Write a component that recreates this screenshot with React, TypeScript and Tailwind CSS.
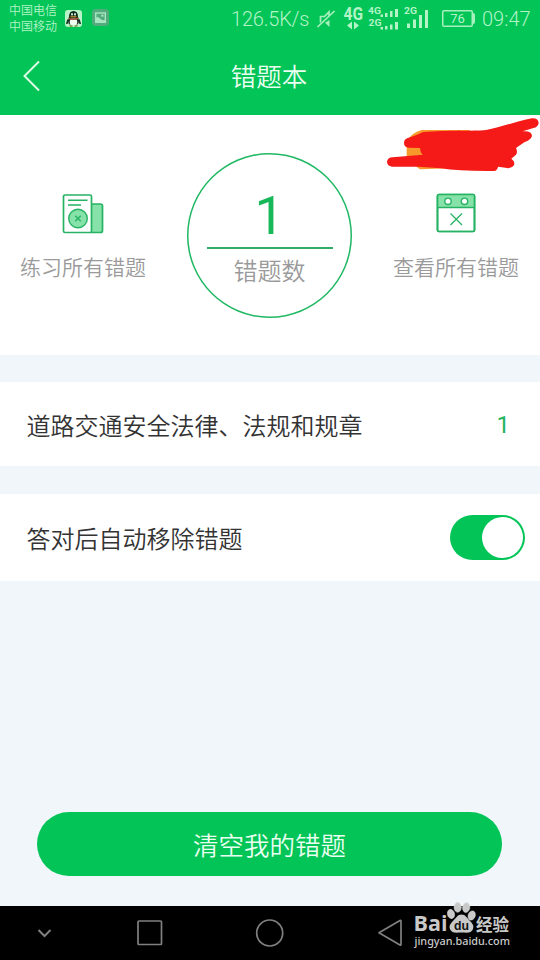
import React from 'react';

const CJK = "font-['Roboto','Noto_Sans_CJK_SC',sans-serif]";

function QQIcon() {
  return (
    <svg width="17" height="17" viewBox="0 0 17 17" className="block">
      <rect width="17" height="17" rx="3" fill="#b9f3c9" />
      <path d="M3 9.500 2 13l1.500-.5M14 9.500 15 13l-1.500-.5" stroke="#15301c" strokeWidth="1.500" fill="none" />
      <path d="M4 7C4 3 5.500 1 8.500 1S13 3 13 7l1 4-1.500 3.500h-8L3 11z" fill="#10261a" />
      <ellipse cx="8.500" cy="12" rx="3.800" ry="3.600" fill="#effff2" />
      <ellipse cx="7" cy="4.300" rx="1" ry="1.400" fill="#c5efcf" />
      <ellipse cx="10" cy="4.300" rx="1" ry="1.400" fill="#c5efcf" />
      <path d="M5.500 6.800h6" stroke="#c79a32" strokeWidth="1.200" />
      <path d="M3.500 8.300q5 2 10 0" stroke="#a8513a" strokeWidth="1.600" fill="none" />
      <path d="M4.500 16h3M9.500 16h3" stroke="#7b8a32" strokeWidth="1.300" />
    </svg>
  );
}

function GalleryIcon() {
  return (
    <svg width="17" height="17" viewBox="0 0 17 17" className="block">
      <rect width="17" height="17" rx="4" fill="#52ab7c" />
      <rect x="3.700" y="4" width="9.600" height="9.300" fill="none" stroke="#a9e5c0" strokeWidth="1.400" />
      <path d="M4 8.500Q6 7 8 9.500t5 1.500v2H4z" fill="#a9e5c0" />
      <rect x="9.300" y="5.700" width="2.200" height="2" fill="#a9e5c0" />
    </svg>
  );
}

function MuteIcon() {
  return (
    <svg width="20" height="20" viewBox="0 0 20 20" className="block" fill="none" stroke="#a6f0bd" strokeWidth="1.700">
      <path d="M1.500 18 18.500 2" />
      <path d="M4.500 13.500V7.500h4L13 2.800v4" />
      <path d="M9 13.800 13.500 11v7z" fill="#a6f0bd" stroke="none" />
    </svg>
  );
}

function SignalCluster() {
  return (
    <svg width="86" height="30" viewBox="344 3 86 30" className="block overflow-visible font-['Roboto',sans-serif] font-bold" fill="#b3f4c7">
      <text x="343.500" y="18.500" fontSize="17.500" textLength="19.500" lengthAdjust="spacingAndGlyphs">4G</text>
      <path d="M347 24.500 352 20.500v8zM354 20.500l5 4-5 4z" />
      <text x="368" y="12.500" fontSize="9" textLength="13" lengthAdjust="spacingAndGlyphs">4G</text>
      <text x="368.500" y="24.500" fontSize="9" textLength="13" lengthAdjust="spacingAndGlyphs">2G</text>
      <path d="M380.500 13.500h2.500V16h-2.500zM385 12h2.500v4H385zM390 10h2.500v6H390zM395 8h3v8h-3z" />
      <path d="M380.500 26h2.500v2.500h-2.500zM385 25h2.500v3.500H385zM390 23.500h2.500v5H390zM395 21h3v7.500h-3z" />
      <text x="404" y="12.500" fontSize="9" textLength="13" lengthAdjust="spacingAndGlyphs">2G</text>
      <path d="M407 22.500h3V27h-3zM413 18.500h3V27h-3zM419 14h3v13h-3zM425 9h3v18h-3z" />
    </svg>
  );
}

function Battery() {
  return (
    <div className="flex items-center">
      <div className="flex h-[17px] w-[31px] items-center justify-center rounded-[2px] text-[13px] leading-none text-[#b3f4c7] shadow-[inset_0_0_0_1.5px_#a6f0bd]">
        76
      </div>
      <div className="h-[11px] w-[2px] rounded-r-sm bg-[#a6f0bd]" />
    </div>
  );
}

function StatusBar() {
  return (
    <div className="flex h-[37px] items-center text-[#b3f4c7]">
      <div className="ml-[9px] w-14 pt-px text-[12px] font-[350] leading-4">
        <div>中国电信</div>
        <div>中国移动</div>
      </div>
      <QQIcon />
      <div className="ml-[10px] pb-[2px]">
        <GalleryIcon />
      </div>
      <div className="ml-[122px] w-[84px] whitespace-nowrap text-[20px] font-light tracking-[-0.2px]">126.5K/s</div>
      <div className="ml-[1px]">
        <MuteIcon />
      </div>
      <div className="ml-[8px]">
        <SignalCluster />
      </div>
      <div className="ml-[12px]">
        <Battery />
      </div>
      <div className="ml-[7px] text-[20px] font-light">09:47</div>
    </div>
  );
}

function PracticeIcon() {
  return (
    <svg width="42" height="42" viewBox="0 0 42 42" className="block" fill="none" stroke="#27b364" strokeWidth="1.700">
      <path d="M29 11h9.500q2 0 2 2v24.500q0 2-2 2H29z" fill="#86e2a9" />
      <rect x="1.500" y="2" width="28" height="37.500" rx="1.500" fill="#fff" />
      <path d="M6 7.200h19.500M6 12h13" strokeWidth="1.400" />
      <circle cx="16" cy="25.500" r="9.300" fill="#86e2a9" strokeWidth="1.400" />
      <path d="m13.200 22.700 5.600 5.600m0-5.600-5.600 5.600" strokeWidth="1.400" />
    </svg>
  );
}

function CalendarIcon() {
  return (
    <svg width="40" height="40" viewBox="0 0 40 40" className="block" fill="none" stroke="#27b364" strokeWidth="1.700">
      <rect x="1.500" y="1.500" width="37" height="37" rx="1.500" fill="#fff" />
      <path d="M2 2h36v12.500H2z" fill="#86e2a9" stroke="none" />
      <rect x="1.500" y="1.500" width="37" height="37" rx="1.500" />
      <path d="M1.500 14.500h37" strokeWidth="1.500" />
      <circle cx="12" cy="8.300" r="3.200" fill="#fff" strokeWidth="1.400" />
      <circle cx="28.500" cy="8.300" r="3.200" fill="#fff" strokeWidth="1.400" />
      <path d="m14.500 20.500 11.500 11.500m0-11.500-11.500 11.500" strokeWidth="1.300" />
    </svg>
  );
}

function Scribble() {
  return (
    <svg width="170" height="66" viewBox="0 0 510 198" className="pointer-events-none absolute top-[-5px] right-0">
      <path d="M110 92Q130 66 155 60H300L330 172 150 178 110 150z" fill="#f79a2b" />
      <path d="M116 83Q140 76 160 66C230 60 310 64 348 60C390 52 440 34 486 25Q504 24 506 38Q506 46 498 52L458 64Q486 62 486 78Q482 90 464 96L438 114Q444 126 438 134L424 146Q436 154 432 166Q424 178 406 173L384 170Q382 182 372 183Q270 184 212 175L146 170H66Q52 168 51 156Q52 142 68 142L158 134Q150 126 150 114L116 113Q102 112 102 98Q102 86 116 83z" fill="#f51a17" />
    </svg>
  );
}

function Watermark() {
  return (
    <svg width="120" height="60" viewBox="410 898 120 60" className="pointer-events-none absolute bottom-[2px] left-[410px] overflow-visible" fill="#c9c9c9">
      <text x="413.500" y="931" fontSize="21" textLength="34" lengthAdjust="spacingAndGlyphs" className="font-['Open_Sans',sans-serif] font-bold">Bai</text>
      <g stroke="#e4e7e9" strokeWidth=".5">
        <ellipse cx="451" cy="914" rx="3.500" ry="4.700" transform="rotate(-15 451 914)" />
        <ellipse cx="457.700" cy="907.300" rx="3.600" ry="5" />
        <ellipse cx="466.200" cy="907.500" rx="3.600" ry="5" transform="rotate(8 466.200 907.500)" />
        <ellipse cx="471.700" cy="915.500" rx="3.500" ry="4.700" transform="rotate(20 471.700 915.500)" />
      </g>
      <path d="M461.500 914.500c4 0 5.500 3.500 8.500 6.500s4.500 5.500 2.500 9-6 2.500-11 2.500-9 1-11-2.500-.5-6 2.500-9 4.500-6.500 8.500-6.500z" />
      <text x="454" y="929.500" fontSize="13" fill="#111" textLength="15" lengthAdjust="spacingAndGlyphs" className="font-['Liberation_Sans',sans-serif] font-bold">du</text>
      <text x="476" y="930.500" fontSize="16.500" textLength="33" className="font-['Noto_Sans_CJK_SC',sans-serif] font-bold">经验</text>
      <text x="414.500" y="944.500" fontSize="11.500" textLength="95.500" lengthAdjust="spacingAndGlyphs" className="font-['Noto_Sans',sans-serif] font-medium">jingyan.baidu.com</text>
    </svg>
  );
}

function NavBar() {
  return (
    <div className="relative h-[54px] bg-black">
      <svg width="540" height="54" viewBox="0 906 540 54" className="block" fill="none" stroke="#808080" strokeWidth="1.700">
        <path d="m38.500 930 6 6 6-6" strokeWidth="2" />
        <rect x="138" y="921" width="23.500" height="23.500" rx="1" />
        <circle cx="269.700" cy="933" r="13" />
        <path d="M379 932.800 400 920.500q1-.4 1 .8v23q0 1.200-1 .7z" strokeLinejoin="round" />
      </svg>
      <Watermark />
    </div>
  );
}

export default function App() {
  return (
    <div className={`flex h-[960px] w-[540px] flex-col overflow-hidden bg-[#f1f6fa] ${CJK}`}>
      <header className="h-[115px] shrink-0 bg-[#02c457]">
        <StatusBar />
        <div className="grid h-[78px] grid-cols-[1fr_auto_1fr] items-center">
          <svg width="20" height="34" viewBox="0 0 20 34" className="ml-[21px] block" fill="none" stroke="#dcfce6" strokeWidth="2">
            <path d="M18 2.500 3.500 17 18 31.500" />
          </svg>
          <h1 className="pt-[2px] pr-[2px] text-[25.500px] font-[350] leading-[38px] text-[#eafff0]">错题本</h1>
        </div>
      </header>

      <section className="relative flex h-[240px] shrink-0 justify-between bg-white pr-[21px] pl-5">
        <div className="flex w-[126px] flex-col items-center pt-[78px]">
          <PracticeIcon />
          <div className="mt-[18px] whitespace-nowrap text-[21px] font-[350] leading-[30px] text-[#9a9a9a]">练习所有错题</div>
        </div>
        <div className="mt-[38px] flex h-[165px] w-[165px] flex-col items-center rounded-full pt-[35px] shadow-[inset_0_0_0_1.5px_#20b863]">
          <div className="h-[59px] text-[53px] leading-[56px] text-[#16b85a]">1</div>
          <div className="h-[2px] w-[126px] bg-[#2eac68]" />
          <div className="mt-[6px] text-[24px] font-[350] leading-[34px] text-[#9a9a9a]">错题数</div>
        </div>
        <div className="flex w-[126px] flex-col items-center pt-[78px]">
          <CalendarIcon />
          <div className="mt-5 whitespace-nowrap text-[21px] font-[350] leading-[30px] text-[#9a9a9a]">查看所有错题</div>
        </div>
        <Scribble />
      </section>

      <section className="mt-[27px] flex h-[84px] shrink-0 items-center justify-between bg-white pr-[30px] pl-[26.500px] text-[24px] text-[#333333]">
        <span className="pt-[5px] font-[350]">道路交通安全法律、法规和规章</span>
        <span className="pt-[2px] text-[#22b35e]">1</span>
      </section>

      <section className="mt-7 flex h-[87px] shrink-0 items-center justify-between bg-white pr-[15px] pl-[26.500px] text-[24px] text-[#333333]">
        <span className="pt-[4px] font-[350]">答对后自动移除错题</span>
        <div className="flex h-[45px] w-[75px] items-center justify-end rounded-full bg-[#02c457] pr-[2px]">
          <div className="h-[41px] w-[41px] rounded-full bg-white" />
        </div>
      </section>

      <main className="flex flex-1 items-end pr-[38px] pb-[30px] pl-[37px]">
        <button className="h-16 w-full rounded-full bg-[#02c457] pt-[5px] text-[25.500px] font-[350] text-[#eafff0]">清空我的错题</button>
      </main>

      <NavBar />
    </div>
  );
}
